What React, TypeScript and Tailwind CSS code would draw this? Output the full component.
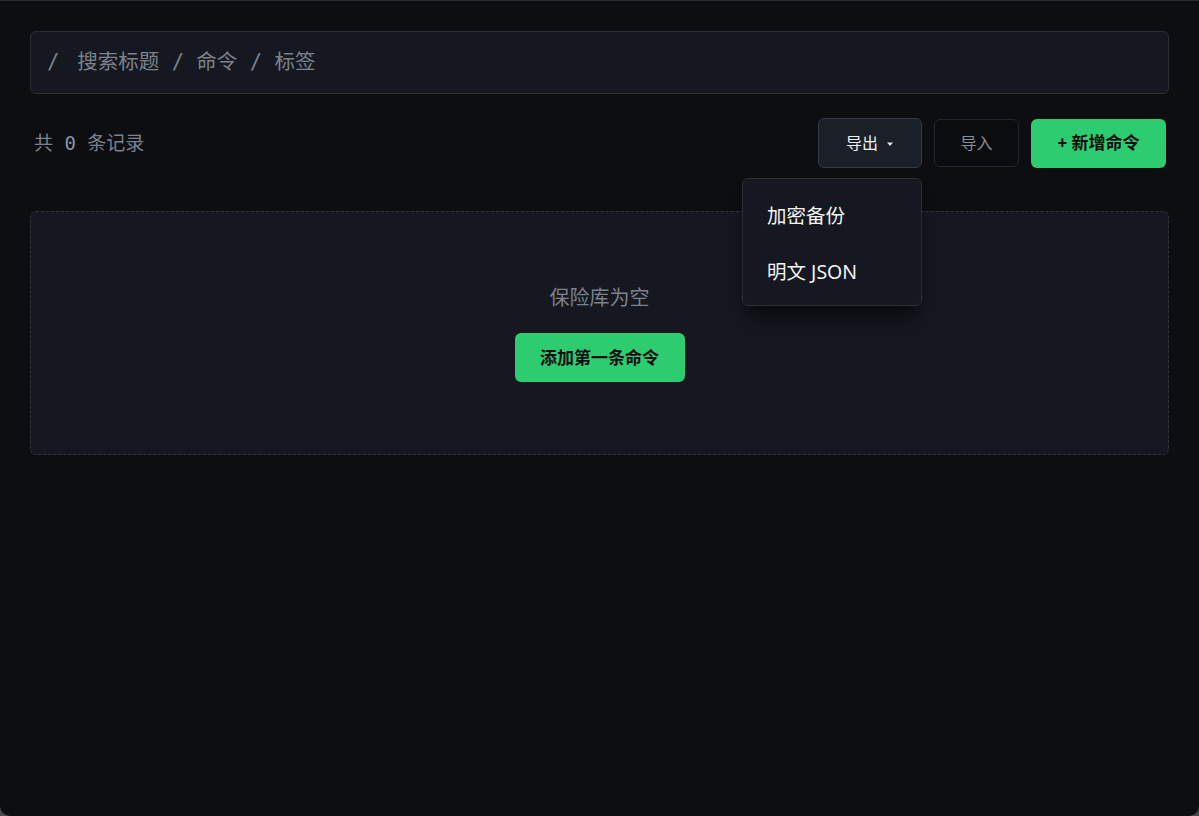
import { useState } from "react";

const mono = { fontFamily: '"DejaVu Sans Mono", "Noto Sans CJK SC", monospace' };
const sans = { fontFamily: '"Noto Sans", "Noto Sans CJK SC", sans-serif' };

function ExportMenu() {
  const [open] = useState(true);
  return (
    <div className="relative">
      <button className="flex h-[50px] w-[104px] items-center justify-center gap-2 rounded-md border border-[#343a46] bg-[#1b1f27] text-[16px] text-[#eef0f3]">
        导出
        <svg width="8" height="6" viewBox="0 0 8 6" className="mt-[1px]">
          <path d="M1 1.5h6L4 5z" fill="#e6e8ec" />
        </svg>
      </button>
      {open && (
        <div className="absolute right-0 top-[60px] z-10 flex w-[180px] flex-col rounded-md border border-[#2b2f38] bg-[#151820] pb-[5px] pt-[9px] shadow-xl shadow-black/40">
          <div className="px-6 py-[11px] text-[19.5px] leading-[34px] text-[#f2f4f7]">加密备份</div>
          <div className="px-6 py-[11px] text-[19.5px] leading-[34px] text-[#f2f4f7]">明文 JSON</div>
        </div>
      )}
    </div>
  );
}

export default function App() {
  const total = 0;
  return (
    <div className="h-[816px] bg-[#4a4a4a]" style={sans}>
      <div className="flex h-full flex-col rounded-b-[10px] border-t border-[#2a2c31] bg-[#0d0e12] px-[30px] pt-[30px]">
        <div
          className="flex h-[63px] items-center rounded-md border border-[#2a2e37] bg-[#151820] px-[16px] text-[20.5px] text-[#7c828d]"
          style={mono}
        >
          /<span className="ml-[18px]">搜索标题 / 命令 / 标签</span>
        </div>

        <div className="mt-[24px] flex items-center justify-between">
          <div className="pl-[4px] text-[19px] text-[#7c828d]" style={mono}>
            共 <span className="text-[#8b95a5]">{total}</span> 条记录
          </div>
          <div className="flex items-center gap-3 pr-[3px]">
            <ExportMenu />
            <button className="h-[48px] w-[85px] rounded-md border border-[#24272e] bg-[#0b0c0f] text-[16px] text-[#8b8f96]">
              导入
            </button>
            <button className="h-[49px] w-[135px] rounded-md bg-[#2ecc71] text-[17px] font-bold text-[#0b0c0f]">
              + 新增命令
            </button>
          </div>
        </div>

        <div className="mt-[43px] flex h-[244px] flex-col items-center rounded-md border border-dashed border-[#30343c] bg-[#151820] pt-[71px]">
          <div className="text-[20px] text-[#7c828d]">保险库为空</div>
          <button className="mt-[20px] h-[49px] w-[170px] rounded-md bg-[#2ecc71] text-[17px] font-bold text-[#0b0c0f]">
            添加第一条命令
          </button>
        </div>
      </div>
    </div>
  );
}
